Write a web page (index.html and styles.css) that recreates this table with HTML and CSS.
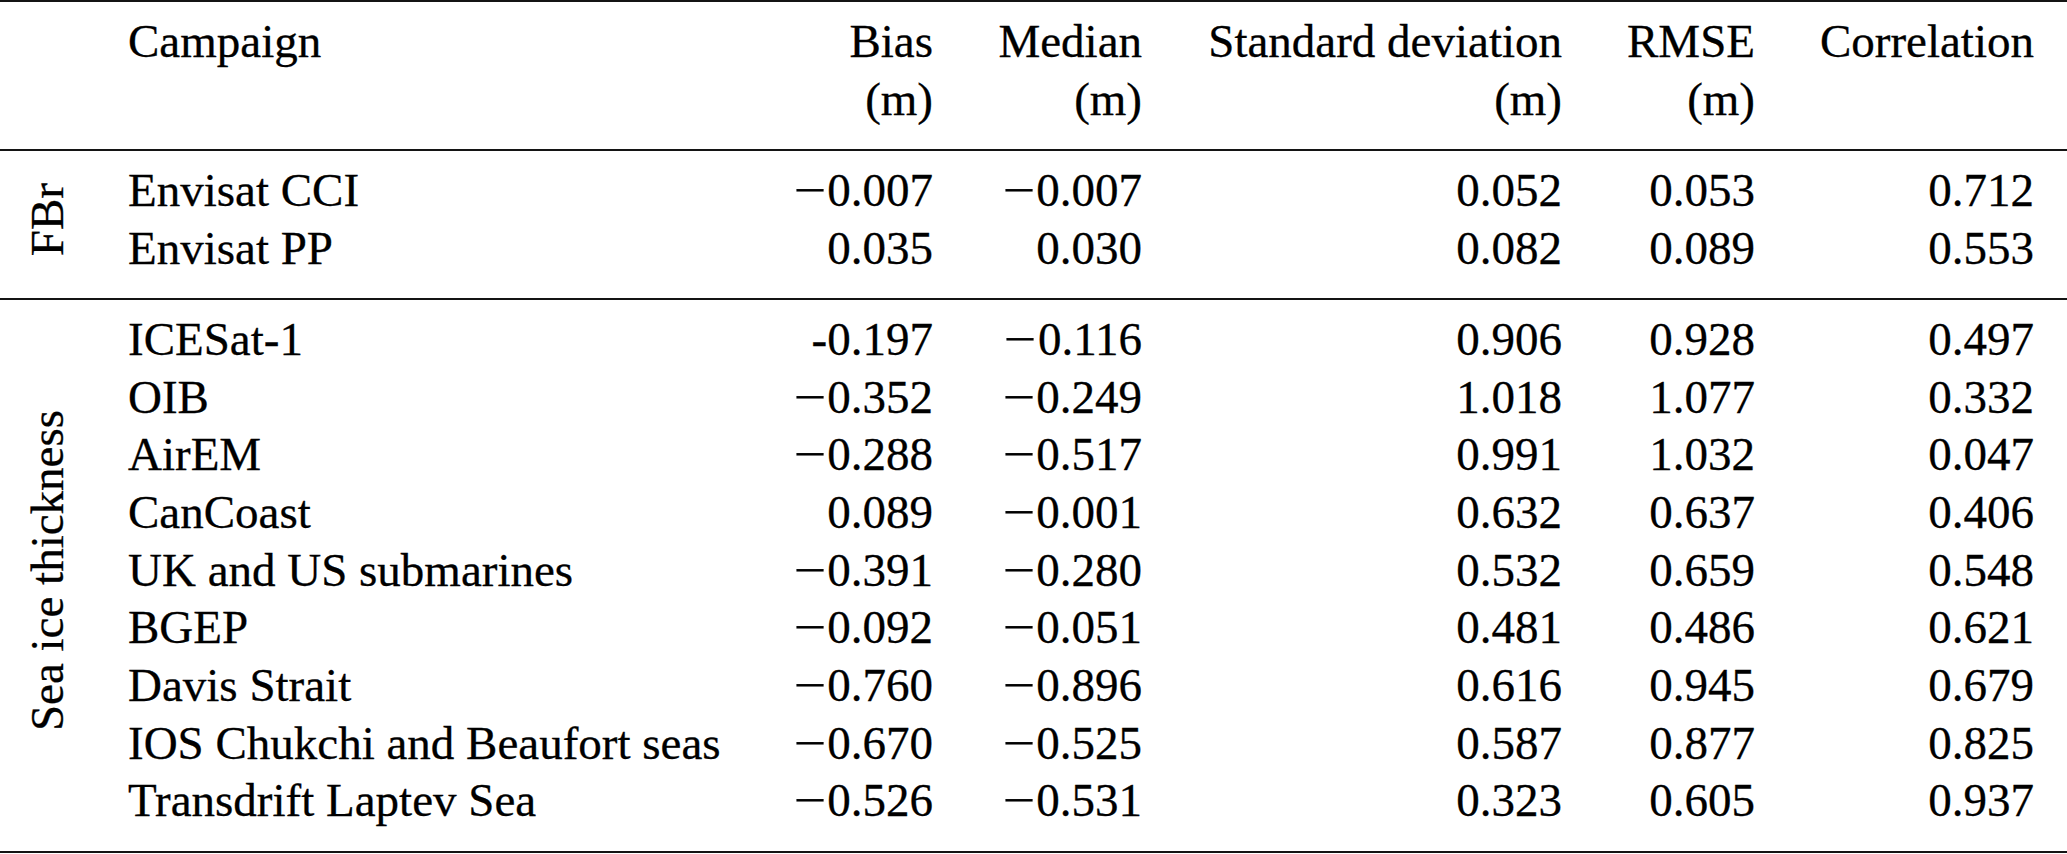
FILE: index.html
```html
<!DOCTYPE html>
<html lang="en">
<head>
<meta charset="utf-8">
<title>Campaign comparison</title>
<link rel="stylesheet" href="styles.css">
</head>
<body>
<div class="tbl">
  <div class="sec head">
    <div class="c lab"></div>
    <div class="c name">Campaign</div>
    <div class="c num">Bias<br>(m)</div>
    <div class="c num">Median<br>(m)</div>
    <div class="c num">Standard deviation<br>(m)</div>
    <div class="c num">RMSE<br>(m)</div>
    <div class="c num">Correlation</div>
  </div>

  <div class="sec">
    <div class="c lab span2"><span class="rot">FBr</span></div>
    <div class="c name">Envisat CCI</div><div class="c num"><span class="neg">−</span>0.007</div><div class="c num"><span class="neg">−</span>0.007</div><div class="c num">0.052</div><div class="c num">0.053</div><div class="c num">0.712</div>
    <div class="c name">Envisat PP</div><div class="c num">0.035</div><div class="c num">0.030</div><div class="c num">0.082</div><div class="c num">0.089</div><div class="c num">0.553</div>
  </div>

  <div class="sec">
    <div class="c lab span9"><span class="rot">Sea ice thickness</span></div>
    <div class="c name">ICESat-1</div><div class="c num">-0.197</div><div class="c num"><span class="neg">−</span>0.116</div><div class="c num">0.906</div><div class="c num">0.928</div><div class="c num">0.497</div>
    <div class="c name">OIB</div><div class="c num"><span class="neg">−</span>0.352</div><div class="c num"><span class="neg">−</span>0.249</div><div class="c num">1.018</div><div class="c num">1.077</div><div class="c num">0.332</div>
    <div class="c name">AirEM</div><div class="c num"><span class="neg">−</span>0.288</div><div class="c num"><span class="neg">−</span>0.517</div><div class="c num">0.991</div><div class="c num">1.032</div><div class="c num">0.047</div>
    <div class="c name">CanCoast</div><div class="c num">0.089</div><div class="c num"><span class="neg">−</span>0.001</div><div class="c num">0.632</div><div class="c num">0.637</div><div class="c num">0.406</div>
    <div class="c name">UK and US submarines</div><div class="c num"><span class="neg">−</span>0.391</div><div class="c num"><span class="neg">−</span>0.280</div><div class="c num">0.532</div><div class="c num">0.659</div><div class="c num">0.548</div>
    <div class="c name">BGEP</div><div class="c num"><span class="neg">−</span>0.092</div><div class="c num"><span class="neg">−</span>0.051</div><div class="c num">0.481</div><div class="c num">0.486</div><div class="c num">0.621</div>
    <div class="c name">Davis Strait</div><div class="c num"><span class="neg">−</span>0.760</div><div class="c num"><span class="neg">−</span>0.896</div><div class="c num">0.616</div><div class="c num">0.945</div><div class="c num">0.679</div>
    <div class="c name">IOS Chukchi and Beaufort seas</div><div class="c num"><span class="neg">−</span>0.670</div><div class="c num"><span class="neg">−</span>0.525</div><div class="c num">0.587</div><div class="c num">0.877</div><div class="c num">0.825</div>
    <div class="c name">Transdrift Laptev Sea</div><div class="c num"><span class="neg">−</span>0.526</div><div class="c num"><span class="neg">−</span>0.531</div><div class="c num">0.323</div><div class="c num">0.605</div><div class="c num">0.937</div>
  </div>
</div>
</body>
</html>
```

FILE: styles.css
```css
html, body {
  margin: 0;
  padding: 0;
  background: #ffffff;
}

body {
  font-family: "Liberation Serif", "Times New Roman", serif;
  font-size: 47px;
  line-height: 57.7px;
  color: #000000;
  -webkit-text-stroke: 0.3px #000000;
}

.tbl {
  width: 2067px;
  border-top: 2px solid #141414;
}

.sec {
  display: grid;
  grid-template-columns: 94px 666px 173px 209px 420px 193px 279px;
  padding: 11px 33px 20.5px 0;
  border-bottom: 2px solid #141414;
}

.c {
  white-space: nowrap;
}

.name {
  padding-left: 34px;
  text-align: left;
}

.num {
  text-align: right;
}

.lab {
  grid-column: 1;
  display: flex;
  align-items: center;
  justify-content: center;
}

.span2 {
  grid-row: 1 / span 2;
}

.span9 {
  grid-row: 1 / span 9;
}

.rot {
  writing-mode: vertical-rl;
  transform: rotate(180deg);
  line-height: 47px;
  white-space: nowrap;
}

.neg {
  display: inline-block;
  transform: scaleX(1.22);
  margin: 0 4px 0 1px;
}
```
